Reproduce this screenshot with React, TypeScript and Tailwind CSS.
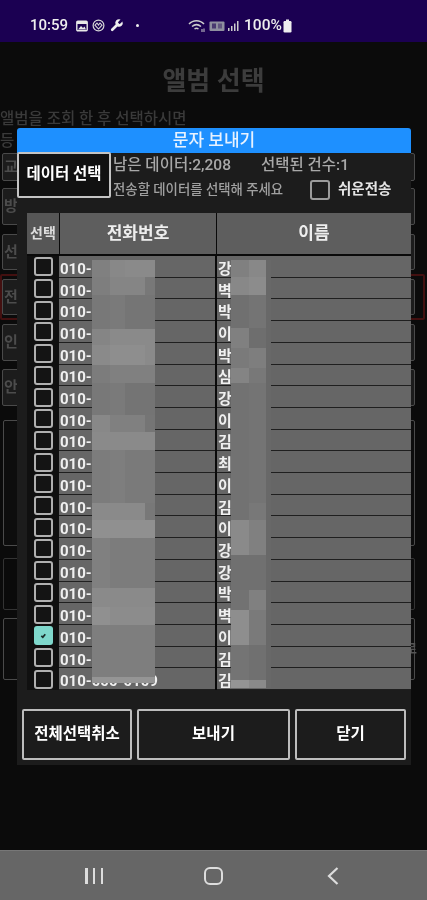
import React from "react";

const names = ["강","벽","박","이","박","심","강","이","김","최","이","김","이","강","강","박","벽","이","김","김"];

const phoneBands: [number, string[]][] = [
  [17, ["#808080","#888888","#8a8a8a","#8a8a8a"]],
  [18, ["#7e7e7e","#858585","#858585","#787878"]],
  [34, ["#787878","#7a7a7a","#757575","#757575"]],
  [16, ["#858585","#8a8a8a","#8a8a8a","#8a8a8a"]],
  [20, ["#8a8a8a","#8e8e8e","#8e8e8e","#8a8a8a"]],
  [18, ["#7c7c7c","#808080","#808080","#808080"]],
  [32, ["#787878","#7a7a7a","#747474","#747474"]],
  [17, ["#888888","#808080","#808080","#757575"]],
  [18, ["#8a8a8a","#8a8a8a","#8a8a8a","#8a8a8a"]],
  [53, ["#7c7c7c","#7e7e7e","#7a7a7a","#7a7a7a"]],
  [17, ["#8a8a8a","#8a8a8a","#8a8a8a","#787878"]],
  [18, ["#909090","#909090","#909090","#909090"]],
  [50, ["#808080","#7c7c7c","#7c7c7c","#7c7c7c"]],
  [19, ["#8a8a8a","#8a8a8a","#8a8a8a","#8a8a8a"]],
  [18, ["#909090","#8c8c8c","#8c8c8c","#8c8c8c"]],
  [52, ["#7e7e7e","#7e7e7e","#7e7e7e","#7e7e7e"]],
  [6, ["#959595","#959595","#959595","#959595"]],
];

const nameBands: [number, string[]][] = [
  [17, ["#808080","#888888","#686868"]],
  [18, ["#888888","#8c8c8c","#686868"]],
  [33, ["#707070","#747474","#686868"]],
  [20, ["#808080","#6e6e6e","#686868"]],
  [20, ["#7a7a7a","#7e7e7e","#686868"]],
  [15, ["#848484","#787878","#686868"]],
  [120, ["#727272","#747474","#686868"]],
  [17, ["#727272","#787878","#686868"]],
  [35, ["#8a8a8a","#808080","#686868"]],
  [35, ["#707070","#707070","#686868"]],
  [20, ["#727272","#808080","#686868"]],
  [35, ["#8e8e8e","#7a7a7a","#686868"]],
  [35, ["#747474","#707070","#686868"]],
  [8, ["#949494","#8a8a8a","#686868"]],
];

function Mosaic({ bands, cols, className }: { bands: [number, string[]][]; cols: string; className: string }) {
  return (
    <div className={className}>
      {bands.map(([h, colors], i) => (
        <div key={i} className={cols} style={{ height: h }}>
          {colors.map((c, j) => (
            <div key={j} style={{ backgroundColor: c }} />
          ))}
        </div>
      ))}
    </div>
  );
}

function Box({ checked }: { checked?: boolean }) {
  return checked ? (
    <div className="flex h-[19px] w-[19px] items-center justify-center rounded-[3px] bg-[#7fd8cc]">
      <svg width="7" height="7" viewBox="0 0 8 8">
        <path d="M1.5 4.5 L3.2 6 L6 2.5" stroke="#1a2a28" strokeWidth="2" fill="none" />
      </svg>
    </div>
  ) : (
    <div className="h-[19px] w-[19px] rounded-[3px] border-[2.5px] border-[#b0b0b0] bg-[#141414]" />
  );
}

function BgButton({ ch, mt, h, red }: { ch: string; mt: string; h: string; red?: boolean }) {
  return (
    <div className={`${mt} ${h} relative mx-[2px] flex w-[413px] items-center rounded-[2px] border border-[#4a4a4a] bg-[#1c1c1c] pl-[1px] text-[15px] font-bold text-[#4c4c4c]`}>
      {ch}
      {red && <div className="absolute -bottom-[6px] -left-[3px] -right-[11px] -top-[6px] rounded-[2px] border-2 border-[#431010]" />}
    </div>
  );
}

export default function App() {
  return (
    <div className="flex h-[900px] w-[427px] flex-col overflow-hidden bg-[#0a0a0a] font-['Roboto','Noto_Sans_CJK_KR',sans-serif] blur-[0.5px]">
      {/* Status bar */}
      <div className="flex h-[42px] items-center bg-[#1b0052] pl-[30px] pt-[9px] text-[#eeeeee]">
        <span className="text-[15px] font-medium leading-none">10:59</span>
        <div className="ml-[8px] flex items-center gap-[4px]">
          <svg width="12" height="12" viewBox="0 0 12 12">
            <rect x="0.8" y="1.2" width="10.4" height="9.6" rx="1" fill="none" stroke="#e8e8e8" strokeWidth="1.4" />
            <rect x="1" y="1" width="10" height="3" fill="#e8e8e8" />
            <path d="M2 9.5 L5 6 L7 8 L8.5 6.5 L10 9.5 Z" fill="#e8e8e8" />
          </svg>
          <svg width="13" height="13" viewBox="0 0 13 13">
            <circle cx="6.5" cy="6.5" r="5.4" fill="none" stroke="#d8d8d8" strokeWidth="1.2" />
            <path d="M3 6.2 L5 4 L6.5 6 L8 4 L10 6.2 L6.5 10 Z" fill="none" stroke="#d8d8d8" strokeWidth="1.1" />
          </svg>
          <svg width="15" height="15" viewBox="0 0 24 24" fill="#eeeeee">
            <path d="M14.7 6.3a1 1 0 0 0 0 1.4l1.6 1.6a1 1 0 0 0 1.4 0l3.77-3.77a6 6 0 0 1-7.94 7.94l-6.91 6.91a2.12 2.12 0 0 1-3-3l6.91-6.91a6 6 0 0 1 7.94-7.94l-3.76 3.76z" />
          </svg>
          <div className="ml-[8px] h-[3px] w-[3px] rounded-full bg-[#eeeeee]" />
        </div>
        <div className="ml-[49px] flex items-center">
          <svg width="18" height="14" viewBox="0 0 18 14" fill="none" stroke="#cccccc" strokeWidth="1.5">
            <path d="M1 5 C5 0.5 12 0.5 16 5" />
            <path d="M4 7.5 C7 5 10 5 13 7.5" />
            <path d="M6.5 10 C8 9 9 9 10.5 10" />
            <path d="M14 10 V13 M16 9.5 V13" strokeWidth="1" />
          </svg>
          <svg width="16" height="12" viewBox="0 0 16 12" className="ml-[3px]">
            <rect x="0.5" y="1.5" width="15" height="9.5" rx="1" fill="#8f8f9f" />
            <rect x="3" y="3.5" width="4" height="5" fill="#1b0052" opacity="0.6" />
            <rect x="9" y="3.5" width="4" height="5" fill="#1b0052" opacity="0.4" />
          </svg>
          <svg width="12" height="12" viewBox="0 0 12 12" className="ml-[2px]" fill="#cccccc">
            <rect x="1" y="8" width="1.5" height="3" />
            <rect x="4" y="6" width="1.5" height="5" />
            <rect x="7" y="3.5" width="1.5" height="7.5" />
            <rect x="10" y="1" width="1.5" height="10" />
          </svg>
          <span className="ml-[5px] text-[15.5px] font-medium leading-none">100%</span>
          <svg width="9" height="14" viewBox="0 0 9 14" className="ml-[1px]" fill="#eeeeee">
            <rect x="3" y="0.5" width="3" height="2" />
            <rect x="0.5" y="2" width="8" height="11.5" rx="1.2" />
          </svg>
        </div>
      </div>

      {/* App screen */}
      <div className="relative flex h-[808px] flex-col bg-[#0b0b0b]">
        <div className="pt-[21px] text-center text-[26px] font-bold leading-[36px] text-[#3c3c3c]">앨범 선택</div>
        <div className="mt-[9px] text-[15.5px] font-medium leading-[22px] text-[#3a3a3a]">
          앨범을 조회 한 후 선택하시면
          <br />
          등
        </div>
        <BgButton ch="교" mt="mt-[1px]" h="h-[28px]" />
        <BgButton ch="방" mt="mt-[7px]" h="h-[37px]" />
        <BgButton ch="선" mt="mt-[9px]" h="h-[36px]" />
        <BgButton ch="전" mt="mt-[9px]" h="h-[36px]" red />
        <BgButton ch="인" mt="mt-[9px]" h="h-[37px]" />
        <BgButton ch="안" mt="mt-[8px]" h="h-[37px]" />
        <div className="mt-[14px] ml-[3px] h-[126px] w-[412px] rounded-[2px] border border-[#4a4a4a] bg-[#0d0d0d]" />
        <div className="mt-[12px] ml-[3px] h-[52px] w-[412px] rounded-[2px] border border-[#333333] bg-[#0a0a0a]" />
        <div className="mt-[8px] ml-[3px] flex h-[62px] w-[412px] items-center justify-end rounded-[2px] border border-[#4a4a4a] bg-[#0d0d0d] text-[13px] font-bold text-[#555555]">
          <span className="-mr-[3px]">로</span>
        </div>

        {/* Dialog */}
        <div className="absolute left-[17px] top-[86px] flex w-[394px] flex-col">
          <div className="flex h-[25px] items-center justify-center rounded-t-[3px] bg-[#1e90ff] text-[17px] font-medium text-[#e8f2ff]">
            문자 보내기
          </div>
          <div className="flex h-[612px] flex-col bg-[#1c1c1c]">
            <div className="flex h-[60px] items-start">
              <div className="-mt-[1px] flex h-[46px] w-[94px] shrink-0 items-center justify-center rounded-[2px] border-2 border-[#c4c4c4] bg-[#111111] text-[15.5px] font-bold leading-none text-white">
                데이터 선택
              </div>
              <div className="ml-[2px] flex-1">
                <div className="flex h-[25px] items-center whitespace-nowrap text-[15.5px] font-medium text-[#a8a8a8]">
                  <span>남은 데이터:2,208</span>
                  <span className="ml-[30px]">선택된 건수:1</span>
                </div>
                <div className="mt-[1px] flex h-[22px] items-center">
                  <span className="w-[197px] whitespace-nowrap text-[13.4px] font-medium text-[#a0a0a0]">전송할 데이터를 선택해 주세요</span>
                  <div className="h-[20px] w-[20px] shrink-0 rounded-[3px] border-[2.5px] border-[#9a9a9a] bg-[#1c1c1c]" />
                  <span className="ml-[8px] whitespace-nowrap text-[14.5px] font-bold text-[#e4e4e4]">쉬운전송</span>
                </div>
              </div>
            </div>

            {/* Table */}
            <div className="relative ml-[10px] w-[384px]">
              <div className="grid h-[43px] grid-cols-[32px_156px_194px] gap-x-[1px] border-b-2 border-[#0a0a0a] bg-[#0a0a0a]">
                <div className="flex items-center justify-center bg-[#565656] text-[14px] font-bold text-[#dddddd]">선택</div>
                <div className="flex items-center justify-center bg-[#5e5e5e] text-[17px] font-bold text-[#eeeeee]">전화번호</div>
                <div className="flex items-center justify-center bg-[#5e5e5e] text-[17px] font-bold text-[#eeeeee]">이름</div>
              </div>
              <div className="flex h-[434px] flex-col bg-[#101010]">
                {names.map((n, i) => (
                  <div key={i} className="grid min-h-0 flex-1 grid-cols-[32px_156px_2px_194px] leading-none">
                    <div className="flex min-h-0 items-center pl-[7px]">
                      <Box checked={i === 17} />
                    </div>
                    <div className="flex min-h-0 items-center border-b border-[#1f1f1f] bg-[#666666] pl-[1px] pt-[6px] text-[15px] font-bold text-[#f0f0f0]">
                      {i === 19 ? "010-000-0109" : "010-"}
                    </div>
                    <div className="bg-[#0a0a0a]" />
                    <div className="flex min-h-0 items-center border-b border-[#1f1f1f] bg-[#666666] pl-[1px] pt-[6px] text-[15px] font-bold text-[#f0f0f0]">
                      {n}
                    </div>
                  </div>
                ))}
              </div>
              <Mosaic
                bands={phoneBands}
                cols="grid grid-cols-[18px_15px_20px_10px]"
                className="absolute left-[65px] top-[47px] w-[63px]"
              />
              <Mosaic
                bands={nameBands}
                cols="grid grid-cols-[18px_17px_5px]"
                className="absolute left-[204px] top-[47px] w-[40px]"
              />
            </div>

            {/* Bottom buttons */}
            <div className="mt-[19px] ml-[5px] flex h-[51px] gap-[5px]">
              <div className="flex w-[110px] items-center justify-center rounded-[2px] border-2 border-[#bdbdbd] text-[15.5px] font-bold text-white">전체선택취소</div>
              <div className="flex w-[153px] items-center justify-center rounded-[2px] border-2 border-[#bdbdbd] text-[15.5px] font-bold text-white">보내기</div>
              <div className="flex w-[111px] items-center justify-center rounded-[2px] border-2 border-[#bdbdbd] text-[15.5px] font-bold text-white">닫기</div>
            </div>
          </div>
        </div>
      </div>

      {/* Nav bar */}
      <div className="flex h-[50px] items-center border-t border-[#777777] bg-[#666666]">
        <div className="ml-[85px] flex w-[18px] justify-between">
          <div className="h-[16px] w-[2.5px] bg-[#dddddd]" />
          <div className="h-[16px] w-[2.5px] bg-[#dddddd]" />
          <div className="h-[16px] w-[2.5px] bg-[#dddddd]" />
        </div>
        <div className="ml-[101px] h-[18px] w-[19px] rounded-[6px] border-[2.5px] border-[#dddddd]" />
        <svg width="12" height="20" viewBox="0 0 12 20" className="ml-[104px]" fill="none" stroke="#dddddd" strokeWidth="2.2">
          <path d="M10.5 2 L2 10 L10.5 18" />
        </svg>
      </div>
    </div>
  );
}
